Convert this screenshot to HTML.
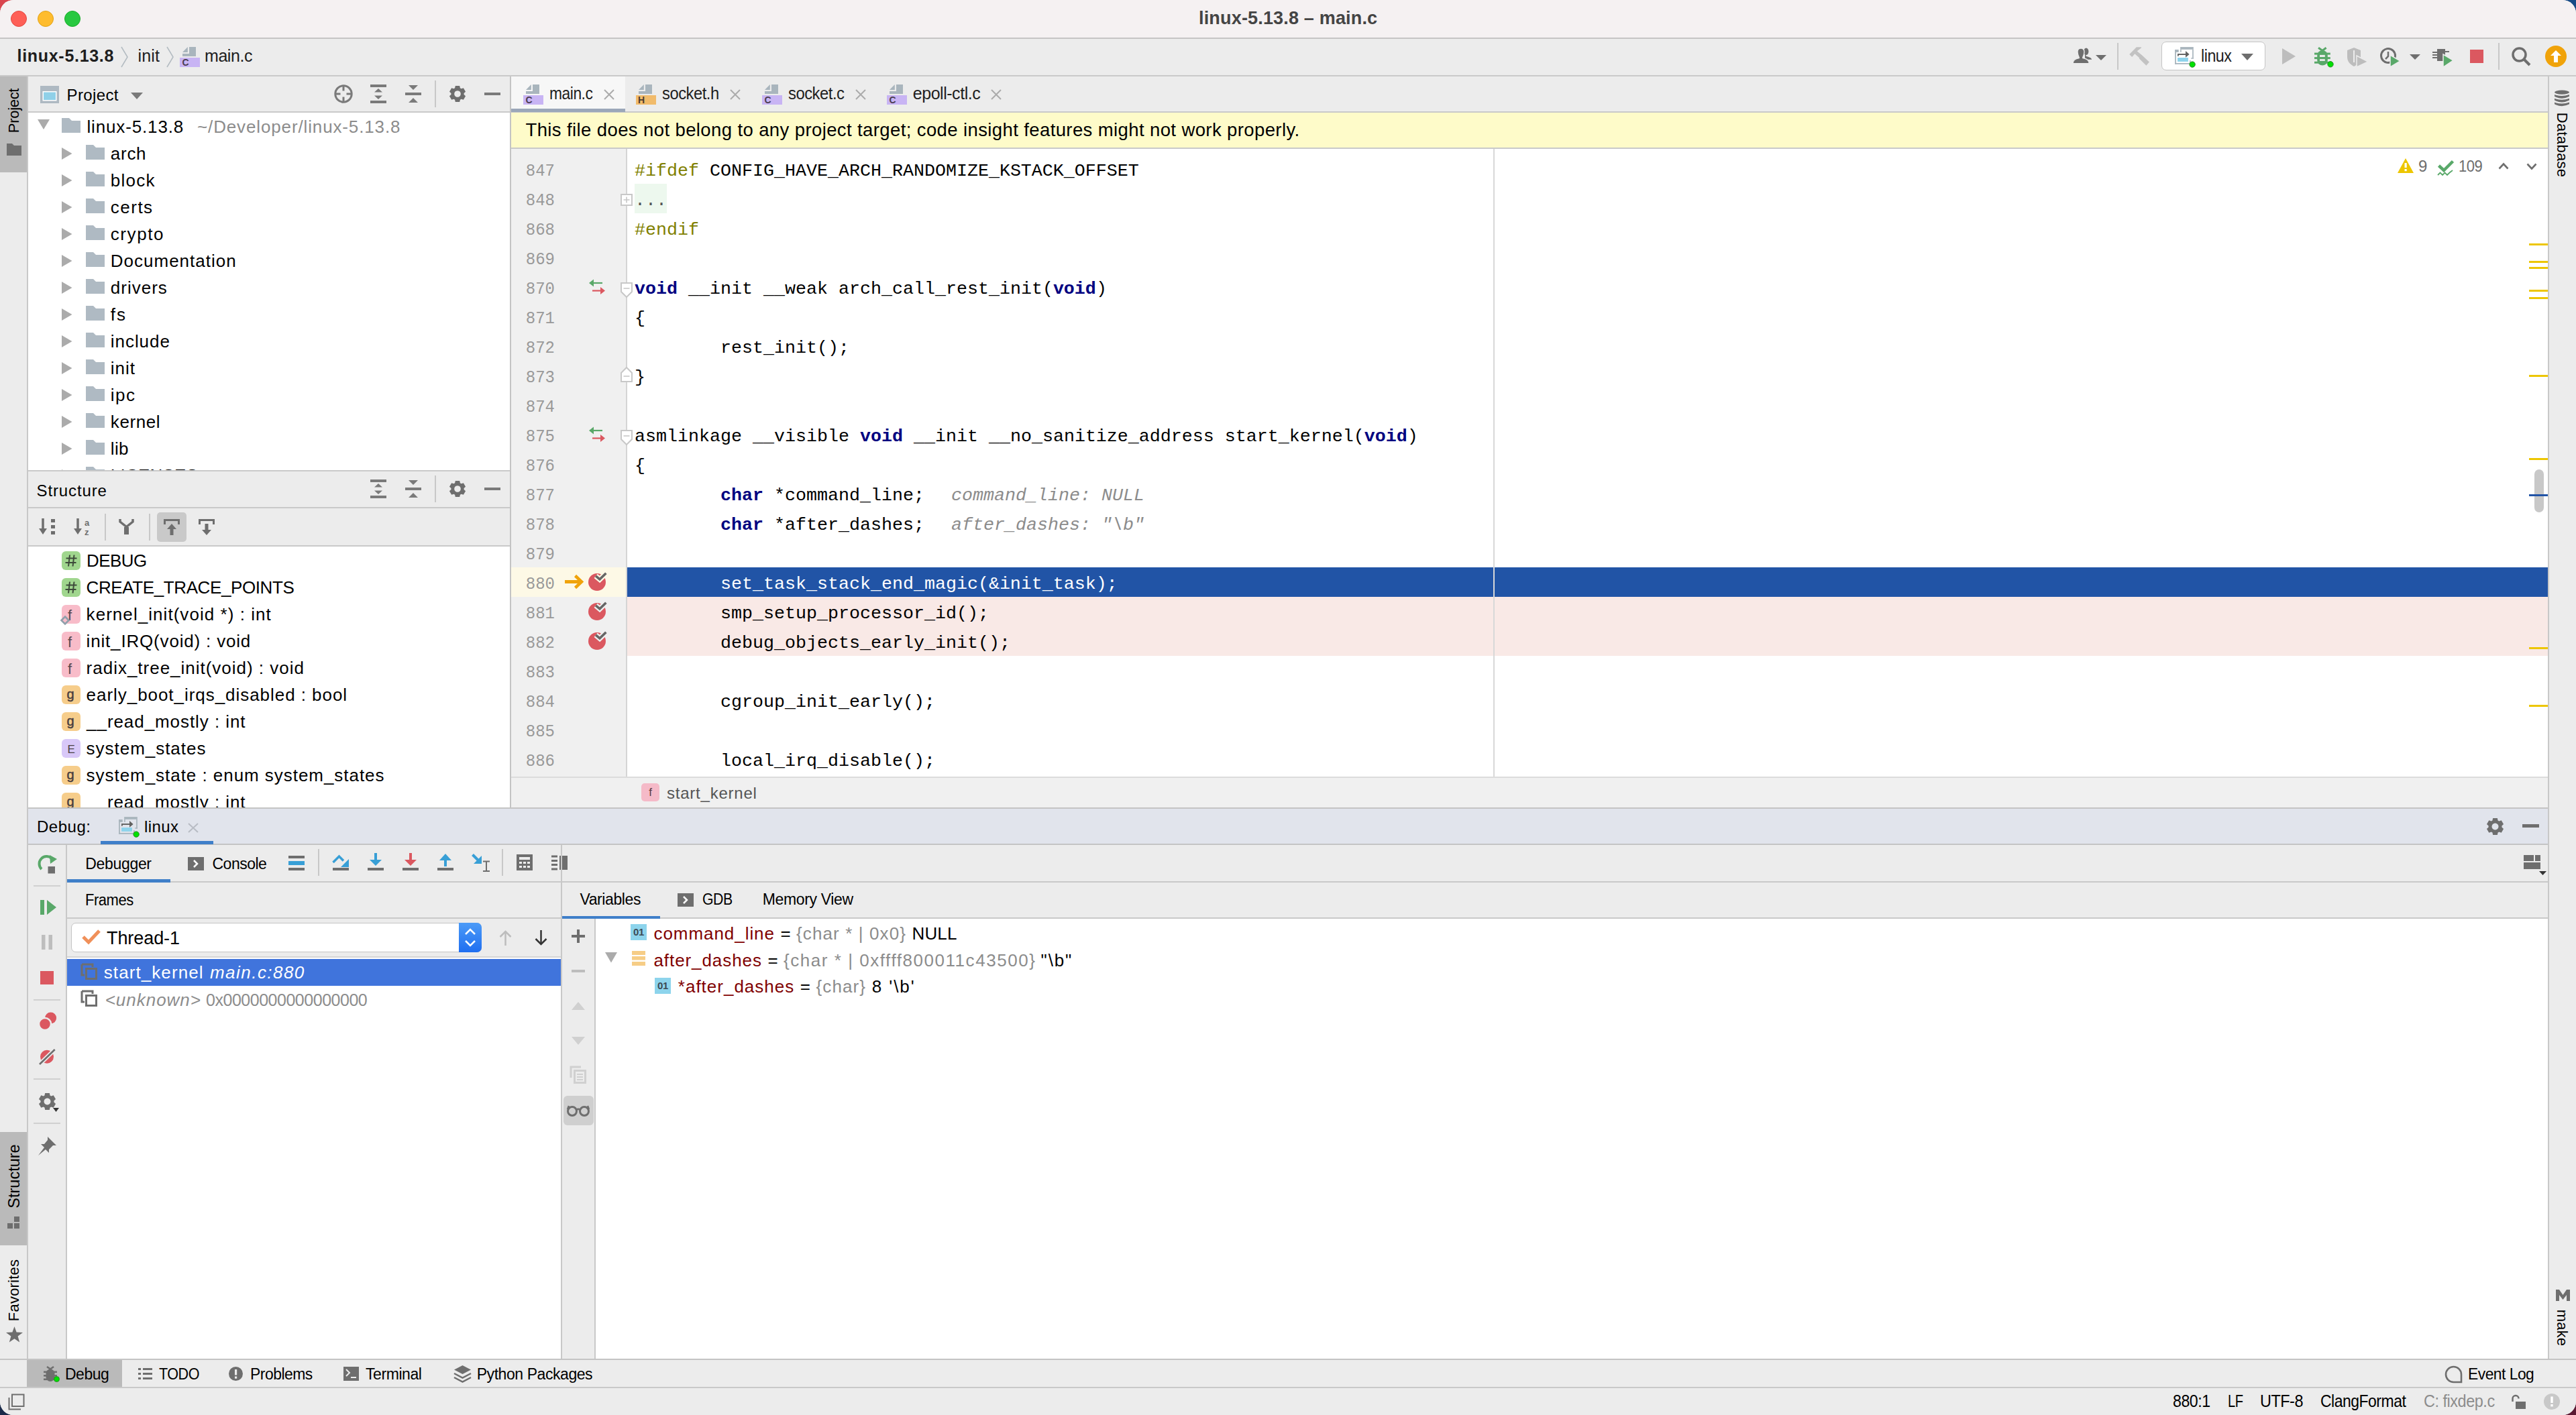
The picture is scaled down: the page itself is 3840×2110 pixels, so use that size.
<!DOCTYPE html><html><head><meta charset="utf-8"><style>*{box-sizing:border-box;margin:0;padding:0}
html,body{width:3840px;height:2110px;overflow:hidden;background:#1b2a4a}
body{position:relative;font-family:"Liberation Sans",sans-serif;font-size:26px;color:#000}
.a{position:absolute}
.t{position:absolute;white-space:pre}
svg{position:absolute;overflow:visible}
</style></head><body><div class="a" style="left:0px;top:0px;width:60px;height:60px;background:#d9454e;"></div>
<div class="a" style="left:3780px;top:0px;width:60px;height:60px;background:#174b86;"></div>
<div class="a" style="left:3780px;top:2050px;width:60px;height:60px;background:#5b1a33;"></div>
<div class="a" style="left:0;top:0;width:3840px;height:2110px;background:#ececec;border-radius:20px;overflow:hidden">
<div class="a" style="left:0px;top:0px;width:3840px;height:57px;background:#f5f1f2;"></div>
<div class="a" style="left:0px;top:56px;width:3840px;height:2px;background:#c6c4c5;"></div>
<div class="a" style="left:16px;top:16px;width:24px;height:24px;border-radius:50%;background:#fe5f57;border:1px solid #e2463f"></div>
<div class="a" style="left:56px;top:16px;width:24px;height:24px;border-radius:50%;background:#febc2e;border:1px solid #e1a116"></div>
<div class="a" style="left:96px;top:16px;width:24px;height:24px;border-radius:50%;background:#28c840;border:1px solid #1aab29"></div>
<div class="t" style="left:1787.00px;top:7.64px;font-size:27px;line-height:38px;letter-spacing:0.175px;color:#444;font-family:'Liberation Sans',sans-serif;font-weight:bold;">linux-5.13.8 – main.c</div>
<div class="a" style="left:0px;top:58px;width:3840px;height:54px;background:#ececec;"></div>
<div class="a" style="left:0px;top:112px;width:3840px;height:2px;background:#c9c9c9;"></div>
<div class="t" style="left:25.50px;top:65.83px;font-size:25px;line-height:35px;letter-spacing:0.705px;color:#1e1e1e;font-family:'Liberation Sans',sans-serif;font-weight:bold;">linux-5.13.8</div>
<svg style="left:180px;top:70px;" width="11" height="30" viewBox="0 0 11 30"><path d="M1 0 L10 15 L1 30" fill="none" stroke="#b4bcc2" stroke-width="1.6"/></svg>
<div class="t" style="left:205.50px;top:65.83px;font-size:25px;line-height:35px;letter-spacing:0.167px;color:#1e1e1e;font-family:'Liberation Sans',sans-serif;">init</div>
<svg style="left:248px;top:70px;" width="11" height="30" viewBox="0 0 11 30"><path d="M1 0 L10 15 L1 30" fill="none" stroke="#b4bcc2" stroke-width="1.6"/></svg>
<svg style="left:268px;top:70px" width="30" height="30" viewBox="0 0 30 30"><path d="M4 8 L11.8 0 V8 Z" fill="#a9b5bd"/><path d="M14 0 H24 V14 H4 V10 H14 Z" fill="#a9b5bd"/><rect x="0" y="16" width="30" height="14" fill="#c8b4f4"/><text x="3.5" y="27.8" font-family="Liberation Sans" font-weight="bold" font-size="14" fill="#4a3c50">C</text></svg>
<div class="t" style="left:305.00px;top:65.83px;font-size:25px;line-height:35px;letter-spacing:-0.450px;color:#1e1e1e;font-family:'Liberation Sans',sans-serif;">main.c</div>
<svg style="left:3088px;top:70px;" width="32" height="26" viewBox="0 0 32 26"><ellipse cx="21.8" cy="6.8" rx="3.6" ry="5.2" fill="#6e6e6e"/><path d="M20 10 L22 14 C26 14.8 29.5 16 30.2 18.7 H20z" fill="#6e6e6e"/><g fill="#6e6e6e" stroke="#ececec" stroke-width="1.4"><path d="M9 7.5 C9 3.5 11 2 14 2 C17 2 19 3.5 19 7.5 C19 11 17.5 14 16.8 15.5 V16.5 C23 17.5 26.2 19.5 26.2 24.7 H2 C2 19.5 5 17.5 11.2 16.5 V15.5 C10.5 14 9 11 9 7.5Z"/></g></svg>
<svg style="left:3124px;top:82px;" width="16" height="8" viewBox="0 0 16 8"><path d="M0 0h16l-8 8z" fill="#6e6e6e"/></svg>
<div class="a" style="left:3156px;top:64px;width:2px;height:40px;background:#c8c8c8;"></div>
<svg style="left:3174px;top:70px;" width="30" height="28" viewBox="0 0 30 28"><path d="M0.2 11L10.8 0.2H17.9V1.6L11.7 6.3L19.8 13.1L29.9 22.6L25.4 27.8L15 17.5L14.8 16L8.3 10.3L4.2 15Z" fill="#c2c2c2"/></svg>
<div class="a" style="left:3222px;top:62px;width:155px;height:43px;background:#fff;border:1.5px solid #c4c4c4;border-radius:7px"></div>
<svg style="left:3241px;top:70px" width="32" height="32" viewBox="0 0 32 32"><g fill="#a9b5bd"><rect x="9.1" y="0.1" width="19.7" height="3.7"/><rect x="9.1" y="3.8" width="1.6" height="4.1"/><rect x="27.1" y="3.8" width="1.7" height="13.8"/><rect x="25.1" y="16.2" width="3.7" height="1.4"/><rect x="1.1" y="4" width="5.6" height="3.9"/><rect x="1.1" y="4" width="1.8" height="21.8"/><rect x="1.1" y="24" width="22" height="1.8"/><rect x="23.1" y="20" width="1.6" height="4"/></g><g fill="#606060"><rect x="5" y="10.1" width="12.6" height="1.9"/><rect x="5" y="10.1" width="1.7" height="3.7"/><path d="M17 5.9L22.6 10.9L17 15.8Z"/></g><rect x="5" y="16" width="15.9" height="5.9" fill="#8ed3ec"/><circle cx="27.1" cy="26.1" r="4.2" fill="#00e000" stroke="#2a8a2a" stroke-width="1"/></svg>
<div class="t" style="left:3281.00px;top:65.83px;font-size:25px;line-height:35px;letter-spacing:-0.500px;color:#1e1e1e;font-family:'Liberation Sans',sans-serif;transform:scaleX(0.9293);transform-origin:0.00px 0;">linux</div>
<svg style="left:3341px;top:80px;" width="18" height="10" viewBox="0 0 18 10"><path d="M0 0h18l-9 10z" fill="#6e6e6e"/></svg>
<svg style="left:3402px;top:72px;" width="20" height="24" viewBox="0 0 20 24"><path d="M0 0 L20 12 L0 24z" fill="#bdbdbd"/></svg>
<svg style="left:3450px;top:70px;" width="30" height="30" viewBox="0 0 30 30"><path d="M6 1.2L12 5.5L17.6 1.2" fill="none" stroke="#59a869" stroke-width="3"/><rect x="4.2" y="5" width="15.6" height="22.6" rx="7.8" fill="#59a869"/><rect x="0" y="8.6" width="23.8" height="3" fill="#59a869"/><rect x="0" y="15.1" width="23.8" height="3" fill="#59a869"/><rect x="0" y="21.7" width="23.8" height="3" fill="#59a869"/><rect x="8" y="11.9" width="7.8" height="3.1" fill="#ececec"/><rect x="8" y="18.1" width="7.8" height="2.8" fill="#ececec"/><circle cx="24" cy="25.8" r="4.2" fill="#00e000" stroke="#2a8a2a" stroke-width="1"/></svg>
<svg style="left:3499px;top:71px;" width="31" height="29" viewBox="0 0 31 29"><path d="M0 4 L10 0 L20 4 V14 C20 22 14 26 10 28 C6 26 0 22 0 14Z" fill="#bdbdbd"/><path d="M10 4v18" stroke="#ececec" stroke-width="2"/><path d="M14 12 L31 21 L14 29z" fill="#bdbdbd" stroke="#ececec" stroke-width="1.5"/></svg>
<svg style="left:3548px;top:71px;" width="31" height="29" viewBox="0 0 31 29"><circle cx="12" cy="12" r="10.5" fill="none" stroke="#6e6e6e" stroke-width="3"/><path d="M12 6v7l-4 4" fill="none" stroke="#6e6e6e" stroke-width="2.5"/><path d="M15 11 L30 20 L15 29z" fill="#59a869" stroke="#ececec" stroke-width="1.5"/></svg>
<svg style="left:3592px;top:81px;" width="16" height="8" viewBox="0 0 16 8"><path d="M0 0h16l-8 8z" fill="#6e6e6e"/></svg>
<svg style="left:3626px;top:73px;" width="31" height="27" viewBox="0 0 31 27"><rect x="7" y="0" width="12" height="18" fill="#6e6e6e"/><path d="M0 5h7M0 9h7M0 13h7M19 4h6" stroke="#6e6e6e" stroke-width="2"/><path d="M16 8 L31 17 L16 27z" fill="#59a869" stroke="#ececec" stroke-width="1.5"/></svg>
<div class="a" style="left:3682px;top:74px;width:20px;height:20px;background:#db5860;"></div>
<div class="a" style="left:3724px;top:64px;width:2px;height:40px;background:#c8c8c8;"></div>
<svg style="left:3744px;top:70px;" width="29" height="29" viewBox="0 0 29 29"><circle cx="11.5" cy="11.5" r="9.5" fill="none" stroke="#6e6e6e" stroke-width="3.5"/><path d="M18.5 18.5 L27 27" stroke="#6e6e6e" stroke-width="4"/></svg>
<svg style="left:3794px;top:68px;" width="32" height="32" viewBox="0 0 32 32"><circle cx="16" cy="16" r="16" fill="#f0a30a"/><path d="M16 7 L24 15 H19 V25 H13 V15 H8Z" fill="#fff"/></svg>
<div class="a" style="left:0px;top:114px;width:40px;height:1912px;background:#ececec;"></div>
<div class="a" style="left:40px;top:114px;width:2px;height:1912px;background:#c8c8c8;"></div>
<div class="a" style="left:0px;top:114px;width:40px;height:143px;background:#bababa;"></div>
<div class="t" style="left:21px;top:165px;font-size:22px;line-height:28px;letter-spacing:-0.3px;transform:translate(-50%,-50%) rotate(-90deg);transform-origin:center;color:#000">Project</div>
<svg style="left:10px;top:214px;" width="22" height="18" viewBox="0 0 22 18"><path d="M0 0H8L11 3H22V18H0Z" fill="#6e6e6e"/></svg>
<div class="a" style="left:0px;top:1688px;width:40px;height:169px;background:#bababa;"></div>
<div class="t" style="left:21px;top:1754px;font-size:23.5px;line-height:28px;letter-spacing:0px;transform:translate(-50%,-50%) rotate(-90deg);color:#000">Structure</div>
<svg style="left:11px;top:1814px;" width="19" height="19" viewBox="0 0 19 19"><rect x="10" y="0" width="8" height="8" fill="#6e6e6e"/><rect x="0" y="10" width="8" height="8" fill="#6e6e6e"/><rect x="10" y="10" width="8" height="8" fill="#6e6e6e"/></svg>
<div class="t" style="left:21px;top:1924px;font-size:22px;line-height:28px;letter-spacing:0.2px;transform:translate(-50%,-50%) rotate(-90deg);color:#000">Favorites</div>
<svg style="left:9px;top:1978px;" width="25" height="25" viewBox="0 0 25 25"><path d="M12.5 0 L15.6 8.6 L25 8.9 L17.6 14.6 L20.2 23.5 L12.5 18.3 L4.8 23.5 L7.4 14.6 L0 8.9 L9.4 8.6Z" fill="#6e6e6e"/></svg>
<div class="a" style="left:3798px;top:114px;width:2px;height:1912px;background:#c8c8c8;"></div>
<div class="a" style="left:3800px;top:114px;width:40px;height:1912px;background:#ececec;"></div>
<svg style="left:3808px;top:134px;" width="22" height="26" viewBox="0 0 22 26"><g fill="#6e6e6e"><ellipse cx="11" cy="3.6" rx="11" ry="3.1"/><path d="M0 7.0Q11 11.0 22 7.0V9.8Q11 15.6 0 9.8Z"/><path d="M0 12.8Q11 16.8 22 12.8V15.6Q11 21.4 0 15.6Z"/><path d="M0 18.5Q11 22.5 22 18.5V21.3Q11 27.1 0 21.3Z"/></g></svg>
<div class="t" style="left:3819px;top:216px;font-size:22px;line-height:28px;letter-spacing:0.3px;transform:translate(-50%,-50%) rotate(90deg);color:#000">Database</div>
<svg style="left:3810px;top:1923px;" width="21" height="17" viewBox="0 0 21 17"><path d="M0 17V0h5l5.5 8L16 0h5v17h-5V8l-5.5 7L5 8v9z" fill="#6e6e6e"/></svg>
<div class="t" style="left:3819px;top:1980px;font-size:22px;line-height:28px;letter-spacing:0.2px;transform:translate(-50%,-50%) rotate(90deg);color:#000">make</div>
<div class="a" style="left:42px;top:114px;width:718px;height:52px;background:#ececec;"></div>
<div class="a" style="left:42px;top:166px;width:718px;height:2px;background:#c9c9c9;"></div>
<div class="a" style="left:42px;top:168px;width:718px;height:535px;background:#fff;"></div>
<svg style="left:60px;top:128px;" width="28" height="26" viewBox="0 0 28 26"><rect x="0" y="0" width="28" height="26" fill="#aeb9c2"/><rect x="3.5" y="8" width="21" height="14.5" fill="#fff"/><rect x="5" y="9.5" width="18" height="11.5" fill="#8fd0e8"/></svg>
<div class="t" style="left:99.60px;top:124.68px;font-size:24px;line-height:34px;letter-spacing:0.375px;color:#000;font-family:'Liberation Sans',sans-serif;">Project</div>
<svg style="left:195px;top:138px;" width="18" height="10" viewBox="0 0 18 10"><path d="M0 0h18l-9 10z" fill="#7a7a7a"/></svg>
<svg style="left:498px;top:126px;" width="28" height="28" viewBox="0 0 28 28"><circle cx="14" cy="14" r="12.2" fill="none" stroke="#7a7a7a" stroke-width="3"/><path d="M14 1.5v8M14 18.5v8M1.5 14h8M18.5 14h8" stroke="#7a7a7a" stroke-width="3"/></svg>
<svg style="left:552px;top:126px;" width="24" height="28" viewBox="0 0 24 28"><rect x="0" y="0" width="24" height="4" fill="#7a7a7a"/><rect x="0" y="24" width="24" height="4" fill="#7a7a7a"/><path d="M6 11.5 L12 6 L18 11.5z M6 16.5 L12 22 L18 16.5z" fill="#7a7a7a"/></svg>
<svg style="left:604px;top:127px;" width="24" height="26" viewBox="0 0 24 26"><path d="M5 0h14l-7 7z M5 26h14l-7-7z" fill="#7a7a7a"/><rect x="0" y="11" width="24" height="4" fill="#7a7a7a"/></svg>
<div class="a" style="left:648px;top:120px;width:2px;height:40px;background:#c8c8c8;"></div>
<svg style="left:669px;top:127px" width="26" height="26" viewBox="0 0 26 26"><path fill="#6e6e6e" fill-rule="evenodd" d="M9.09 4.23 L9.79 0.92 L16.21 0.92 L16.91 4.23 L18.63 5.23 L21.85 4.18 L25.07 9.74 L22.55 12.01 L22.55 13.99 L25.07 16.26 L21.85 21.82 L18.63 20.77 L16.91 21.77 L16.21 25.08 L9.79 25.08 L9.09 21.77 L7.37 20.77 L4.15 21.82 L0.93 16.26 L3.45 13.99 L3.45 12.01 L0.93 9.74 L4.15 4.18 L7.37 5.23Z M13 8.2a4.8 4.8 0 1 0 0.01 0Z"/></svg>
<div class="a" style="left:722px;top:138px;width:24px;height:4px;background:#7a7a7a;"></div>
<svg style="left:56px;top:178px;" width="18" height="15" viewBox="0 0 18 15"><path d="M0 0h18l-9 15z" fill="#ababab"/></svg>
<svg style="left:92px;top:176px" width="28" height="22" viewBox="0 0 28 22"><path d="M0 0 H11 L15 4 H28 V22 H0 Z" fill="#afbac3"/></svg>
<div class="t" style="left:129.50px;top:170.99px;font-size:26px;line-height:36px;letter-spacing:0.845px;color:#000;font-family:'Liberation Sans',sans-serif;">linux-5.13.8</div>
<div class="t" style="left:294.00px;top:170.99px;font-size:26px;line-height:36px;letter-spacing:0.865px;color:#8c8c8c;font-family:'Liberation Sans',sans-serif;">~/Developer/linux-5.13.8</div>
<svg style="left:92px;top:220px;" width="16" height="18" viewBox="0 0 16 18"><path d="M0 0l15.5 9L0 18z" fill="#ababab"/></svg>
<svg style="left:128px;top:216px" width="28" height="22" viewBox="0 0 28 22"><path d="M0 0 H11 L15 4 H28 V22 H0 Z" fill="#afbac3"/></svg>
<div class="t" style="left:164.80px;top:210.99px;font-size:26px;line-height:36px;letter-spacing:0.733px;color:#000;font-family:'Liberation Sans',sans-serif;">arch</div>
<svg style="left:92px;top:260px;" width="16" height="18" viewBox="0 0 16 18"><path d="M0 0l15.5 9L0 18z" fill="#ababab"/></svg>
<svg style="left:128px;top:256px" width="28" height="22" viewBox="0 0 28 22"><path d="M0 0 H11 L15 4 H28 V22 H0 Z" fill="#afbac3"/></svg>
<div class="t" style="left:164.80px;top:250.99px;font-size:26px;line-height:36px;letter-spacing:1.250px;color:#000;font-family:'Liberation Sans',sans-serif;">block</div>
<svg style="left:92px;top:300px;" width="16" height="18" viewBox="0 0 16 18"><path d="M0 0l15.5 9L0 18z" fill="#ababab"/></svg>
<svg style="left:128px;top:296px" width="28" height="22" viewBox="0 0 28 22"><path d="M0 0 H11 L15 4 H28 V22 H0 Z" fill="#afbac3"/></svg>
<div class="t" style="left:164.80px;top:290.99px;font-size:26px;line-height:36px;letter-spacing:1.488px;color:#000;font-family:'Liberation Sans',sans-serif;">certs</div>
<svg style="left:92px;top:340px;" width="16" height="18" viewBox="0 0 16 18"><path d="M0 0l15.5 9L0 18z" fill="#ababab"/></svg>
<svg style="left:128px;top:336px" width="28" height="22" viewBox="0 0 28 22"><path d="M0 0 H11 L15 4 H28 V22 H0 Z" fill="#afbac3"/></svg>
<div class="t" style="left:164.80px;top:330.99px;font-size:26px;line-height:36px;letter-spacing:1.570px;color:#000;font-family:'Liberation Sans',sans-serif;">crypto</div>
<svg style="left:92px;top:380px;" width="16" height="18" viewBox="0 0 16 18"><path d="M0 0l15.5 9L0 18z" fill="#ababab"/></svg>
<svg style="left:128px;top:376px" width="28" height="22" viewBox="0 0 28 22"><path d="M0 0 H11 L15 4 H28 V22 H0 Z" fill="#afbac3"/></svg>
<div class="t" style="left:164.80px;top:370.99px;font-size:26px;line-height:36px;letter-spacing:1.000px;color:#000;font-family:'Liberation Sans',sans-serif;">Documentation</div>
<svg style="left:92px;top:420px;" width="16" height="18" viewBox="0 0 16 18"><path d="M0 0l15.5 9L0 18z" fill="#ababab"/></svg>
<svg style="left:128px;top:416px" width="28" height="22" viewBox="0 0 28 22"><path d="M0 0 H11 L15 4 H28 V22 H0 Z" fill="#afbac3"/></svg>
<div class="t" style="left:164.80px;top:410.99px;font-size:26px;line-height:36px;letter-spacing:1.000px;color:#000;font-family:'Liberation Sans',sans-serif;">drivers</div>
<svg style="left:92px;top:460px;" width="16" height="18" viewBox="0 0 16 18"><path d="M0 0l15.5 9L0 18z" fill="#ababab"/></svg>
<svg style="left:128px;top:456px" width="28" height="22" viewBox="0 0 28 22"><path d="M0 0 H11 L15 4 H28 V22 H0 Z" fill="#afbac3"/></svg>
<div class="t" style="left:164.80px;top:450.99px;font-size:26px;line-height:36px;letter-spacing:1.950px;color:#000;font-family:'Liberation Sans',sans-serif;">fs</div>
<svg style="left:92px;top:500px;" width="16" height="18" viewBox="0 0 16 18"><path d="M0 0l15.5 9L0 18z" fill="#ababab"/></svg>
<svg style="left:128px;top:496px" width="28" height="22" viewBox="0 0 28 22"><path d="M0 0 H11 L15 4 H28 V22 H0 Z" fill="#afbac3"/></svg>
<div class="t" style="left:164.80px;top:490.99px;font-size:26px;line-height:36px;letter-spacing:0.950px;color:#000;font-family:'Liberation Sans',sans-serif;">include</div>
<svg style="left:92px;top:540px;" width="16" height="18" viewBox="0 0 16 18"><path d="M0 0l15.5 9L0 18z" fill="#ababab"/></svg>
<svg style="left:128px;top:536px" width="28" height="22" viewBox="0 0 28 22"><path d="M0 0 H11 L15 4 H28 V22 H0 Z" fill="#afbac3"/></svg>
<div class="t" style="left:164.80px;top:530.99px;font-size:26px;line-height:36px;letter-spacing:0.983px;color:#000;font-family:'Liberation Sans',sans-serif;">init</div>
<svg style="left:92px;top:580px;" width="16" height="18" viewBox="0 0 16 18"><path d="M0 0l15.5 9L0 18z" fill="#ababab"/></svg>
<svg style="left:128px;top:576px" width="28" height="22" viewBox="0 0 28 22"><path d="M0 0 H11 L15 4 H28 V22 H0 Z" fill="#afbac3"/></svg>
<div class="t" style="left:164.80px;top:570.99px;font-size:26px;line-height:36px;letter-spacing:1.475px;color:#000;font-family:'Liberation Sans',sans-serif;">ipc</div>
<svg style="left:92px;top:620px;" width="16" height="18" viewBox="0 0 16 18"><path d="M0 0l15.5 9L0 18z" fill="#ababab"/></svg>
<svg style="left:128px;top:616px" width="28" height="22" viewBox="0 0 28 22"><path d="M0 0 H11 L15 4 H28 V22 H0 Z" fill="#afbac3"/></svg>
<div class="t" style="left:164.80px;top:610.99px;font-size:26px;line-height:36px;letter-spacing:0.590px;color:#000;font-family:'Liberation Sans',sans-serif;">kernel</div>
<svg style="left:92px;top:660px;" width="16" height="18" viewBox="0 0 16 18"><path d="M0 0l15.5 9L0 18z" fill="#ababab"/></svg>
<svg style="left:128px;top:656px" width="28" height="22" viewBox="0 0 28 22"><path d="M0 0 H11 L15 4 H28 V22 H0 Z" fill="#afbac3"/></svg>
<div class="t" style="left:164.80px;top:650.99px;font-size:26px;line-height:36px;letter-spacing:0.350px;color:#000;font-family:'Liberation Sans',sans-serif;">lib</div>
<svg style="left:92px;top:700px;" width="16" height="18" viewBox="0 0 16 18"><path d="M0 0l15.5 9L0 18z" fill="#ababab"/></svg>
<svg style="left:128px;top:696px" width="28" height="22" viewBox="0 0 28 22"><path d="M0 0 H11 L15 4 H28 V22 H0 Z" fill="#afbac3"/></svg>
<div class="t" style="left:164.80px;top:690.99px;font-size:26px;line-height:36px;letter-spacing:0.214px;color:#000;font-family:'Liberation Sans',sans-serif;">LICENSES</div>
<div class="a" style="left:42px;top:701px;width:718px;height:2px;background:#c9c9c9;"></div>
<div class="a" style="left:42px;top:703px;width:718px;height:53px;background:#ececec;"></div>
<div class="t" style="left:54.50px;top:715.18px;font-size:24px;line-height:34px;letter-spacing:0.881px;color:#000;font-family:'Liberation Sans',sans-serif;">Structure</div>
<svg style="left:552px;top:715px;" width="24" height="28" viewBox="0 0 24 28"><rect x="0" y="0" width="24" height="4" fill="#7a7a7a"/><rect x="0" y="24" width="24" height="4" fill="#7a7a7a"/><path d="M6 11.5 L12 6 L18 11.5z M6 16.5 L12 22 L18 16.5z" fill="#7a7a7a"/></svg>
<svg style="left:604px;top:716px;" width="24" height="26" viewBox="0 0 24 26"><path d="M5 0h14l-7 7z M5 26h14l-7-7z" fill="#7a7a7a"/><rect x="0" y="11" width="24" height="4" fill="#7a7a7a"/></svg>
<div class="a" style="left:648px;top:709px;width:2px;height:40px;background:#c8c8c8;"></div>
<svg style="left:669px;top:716px" width="26" height="26" viewBox="0 0 26 26"><path fill="#6e6e6e" fill-rule="evenodd" d="M9.09 4.23 L9.79 0.92 L16.21 0.92 L16.91 4.23 L18.63 5.23 L21.85 4.18 L25.07 9.74 L22.55 12.01 L22.55 13.99 L25.07 16.26 L21.85 21.82 L18.63 20.77 L16.91 21.77 L16.21 25.08 L9.79 25.08 L9.09 21.77 L7.37 20.77 L4.15 21.82 L0.93 16.26 L3.45 13.99 L3.45 12.01 L0.93 9.74 L4.15 4.18 L7.37 5.23Z M13 8.2a4.8 4.8 0 1 0 0.01 0Z"/></svg>
<div class="a" style="left:722px;top:727px;width:24px;height:4px;background:#7a7a7a;"></div>
<div class="a" style="left:42px;top:756px;width:718px;height:2px;background:#c9c9c9;"></div>
<div class="a" style="left:42px;top:758px;width:718px;height:55px;background:#ececec;"></div>
<div class="a" style="left:42px;top:813px;width:718px;height:2px;background:#c9c9c9;"></div>
<div class="a" style="left:42px;top:815px;width:718px;height:390px;background:#fff;"></div>
<svg style="left:58px;top:773px;" width="24" height="25" viewBox="0 0 24 25"><path d="M6 0v17" stroke="#6e6e6e" stroke-width="3.5"/><path d="M0 15h12l-6 9z" fill="#6e6e6e"/><rect x="18" y="1" width="6" height="5" fill="#6e6e6e"/><rect x="18" y="10" width="6" height="5" fill="#6e6e6e"/><rect x="18" y="19" width="6" height="5" fill="#6e6e6e"/></svg>
<svg style="left:110px;top:773px;" width="27" height="25" viewBox="0 0 27 25"><path d="M6 0v17" stroke="#6e6e6e" stroke-width="3.5"/><path d="M0 15h12l-6 9z" fill="#6e6e6e"/><text x="16" y="11" font-family="Liberation Sans" font-weight="bold" font-size="13" fill="#6e6e6e">a</text><text x="16" y="25" font-family="Liberation Sans" font-weight="bold" font-size="13" fill="#6e6e6e">z</text></svg>
<div class="a" style="left:156px;top:766px;width:2px;height:40px;background:#c8c8c8;"></div>
<svg style="left:177px;top:774px;" width="23" height="23" viewBox="0 0 23 23"><path d="M2 0v4l9.5 7.5L21 4V0" fill="none" stroke="#6e6e6e" stroke-width="3.5"/><rect x="8" y="12" width="7" height="11" fill="#6e6e6e"/></svg>
<div class="a" style="left:222px;top:766px;width:2px;height:40px;background:#c8c8c8;"></div>
<div class="a" style="left:234px;top:764px;width:44px;height:44px;background:#c9c9c9;border-radius:5px"></div>
<svg style="left:244px;top:774px;" width="24" height="24" viewBox="0 0 24 24"><path d="M1.5 8V1.5h21V8" fill="none" stroke="#6e6e6e" stroke-width="3"/><path d="M12 7 L19 15 H14.5 V24 H9.5 V15 H5Z" fill="#6e6e6e"/></svg>
<svg style="left:296px;top:774px;" width="24" height="24" viewBox="0 0 24 24"><path d="M1.5 8V1.5h21V8" fill="none" stroke="#6e6e6e" stroke-width="3"/><path d="M12 24 L19 16 H14.5 V7 H9.5 V16 H5Z" fill="#6e6e6e"/></svg>
<svg style="left:92px;top:822px;" width="28" height="28" viewBox="0 0 28 28"><rect width="28" height="28" rx="6" fill="#a0d68e"/><path d="M6.5 10.5H22.5M5.5 17H21.5M12 5.5L10 22.5M18.5 5.5L16.5 22.5" stroke="#3d4a3a" stroke-width="2.0"/></svg>
<div class="t" style="left:128.60px;top:817.99px;font-size:26px;line-height:36px;letter-spacing:-0.500px;color:#000;font-family:'Liberation Sans',sans-serif;transform:scaleX(0.9956);transform-origin:0.00px 0;">DEBUG</div>
<svg style="left:92px;top:862px;" width="28" height="28" viewBox="0 0 28 28"><rect width="28" height="28" rx="6" fill="#a0d68e"/><path d="M6.5 10.5H22.5M5.5 17H21.5M12 5.5L10 22.5M18.5 5.5L16.5 22.5" stroke="#3d4a3a" stroke-width="2.0"/></svg>
<div class="t" style="left:128.60px;top:857.99px;font-size:26px;line-height:36px;letter-spacing:-0.400px;color:#000;font-family:'Liberation Sans',sans-serif;">CREATE_TRACE_POINTS</div>
<svg style="left:92px;top:902px;" width="28" height="28" viewBox="0 0 28 28"><rect width="28" height="28" rx="6" fill="#f8bcc9"/><text x="9" y="23" font-family="Liberation Sans" font-size="22" fill="#5a4a4e">f</text></svg>
<svg style="left:90px;top:918px;" width="14" height="14" viewBox="0 0 14 14"><path d="M7 1.5L12.5 7L7 12.5L1.5 7Z" fill="#f8bcc9" stroke="#8fa0ab" stroke-width="2.6"/></svg>
<div class="t" style="left:128.60px;top:897.99px;font-size:26px;line-height:36px;letter-spacing:1.050px;color:#000;font-family:'Liberation Sans',sans-serif;">kernel_init(void *) : int</div>
<svg style="left:92px;top:942px;" width="28" height="28" viewBox="0 0 28 28"><rect width="28" height="28" rx="6" fill="#f8bcc9"/><text x="9" y="23" font-family="Liberation Sans" font-size="22" fill="#5a4a4e">f</text></svg>
<div class="t" style="left:128.60px;top:937.99px;font-size:26px;line-height:36px;letter-spacing:0.822px;color:#000;font-family:'Liberation Sans',sans-serif;">init_IRQ(void) : void</div>
<svg style="left:92px;top:982px;" width="28" height="28" viewBox="0 0 28 28"><rect width="28" height="28" rx="6" fill="#f8bcc9"/><text x="9" y="23" font-family="Liberation Sans" font-size="22" fill="#5a4a4e">f</text></svg>
<div class="t" style="left:128.60px;top:977.99px;font-size:26px;line-height:36px;letter-spacing:0.987px;color:#000;font-family:'Liberation Sans',sans-serif;">radix_tree_init(void) : void</div>
<svg style="left:92px;top:1022px;" width="28" height="28" viewBox="0 0 28 28"><rect width="28" height="28" rx="6" fill="#f6cd8b"/><text x="7.5" y="19.5" font-family="Liberation Sans" font-size="20" fill="#4a4040" stroke="#4a4040" stroke-width="0.5">g</text></svg>
<div class="t" style="left:128.60px;top:1017.99px;font-size:26px;line-height:36px;letter-spacing:0.953px;color:#000;font-family:'Liberation Sans',sans-serif;">early_boot_irqs_disabled : bool</div>
<svg style="left:92px;top:1062px;" width="28" height="28" viewBox="0 0 28 28"><rect width="28" height="28" rx="6" fill="#f6cd8b"/><text x="7.5" y="19.5" font-family="Liberation Sans" font-size="20" fill="#4a4040" stroke="#4a4040" stroke-width="0.5">g</text></svg>
<div class="t" style="left:129.10px;top:1057.99px;font-size:26px;line-height:36px;letter-spacing:0.931px;color:#000;font-family:'Liberation Sans',sans-serif;">__read_mostly : int</div>
<svg style="left:92px;top:1102px;" width="28" height="28" viewBox="0 0 28 28"><rect width="28" height="28" rx="6" fill="#d8c8f8"/><text x="8.5" y="20.5" font-family="Liberation Sans" font-size="17" fill="#4a4040">E</text></svg>
<div class="t" style="left:128.60px;top:1097.99px;font-size:26px;line-height:36px;letter-spacing:0.971px;color:#000;font-family:'Liberation Sans',sans-serif;">system_states</div>
<svg style="left:92px;top:1142px;" width="28" height="28" viewBox="0 0 28 28"><rect width="28" height="28" rx="6" fill="#f6cd8b"/><text x="7.5" y="19.5" font-family="Liberation Sans" font-size="20" fill="#4a4040" stroke="#4a4040" stroke-width="0.5">g</text></svg>
<div class="t" style="left:128.60px;top:1137.99px;font-size:26px;line-height:36px;letter-spacing:0.958px;color:#000;font-family:'Liberation Sans',sans-serif;">system_state : enum system_states</div>
<svg style="left:92px;top:1182px;" width="28" height="28" viewBox="0 0 28 28"><rect width="28" height="28" rx="6" fill="#f6cd8b"/><text x="7.5" y="19.5" font-family="Liberation Sans" font-size="20" fill="#4a4040" stroke="#4a4040" stroke-width="0.5">g</text></svg>
<div class="t" style="left:129.10px;top:1177.99px;font-size:26px;line-height:36px;letter-spacing:0.931px;color:#000;font-family:'Liberation Sans',sans-serif;">__read_mostly : int</div>
<div class="a" style="left:760px;top:114px;width:2px;height:1091px;background:#c4c4c4;"></div>
<div class="a" style="left:762px;top:114px;width:3036px;height:52px;background:#ececec;"></div>
<div class="a" style="left:762px;top:166px;width:3036px;height:2px;background:#c9c9c9;"></div>
<div class="a" style="left:762px;top:114px;width:170px;height:48px;background:#f7f7f7;"></div>
<div class="a" style="left:762px;top:162px;width:170px;height:5px;background:#9ba7b9;"></div>
<svg style="left:780px;top:126px" width="30" height="30" viewBox="0 0 30 30"><path d="M4 8 L11.8 0 V8 Z" fill="#a9b5bd"/><path d="M14 0 H24 V14 H4 V10 H14 Z" fill="#a9b5bd"/><rect x="0" y="16" width="30" height="14" fill="#c8b4f4"/><text x="3.5" y="27.8" font-family="Liberation Sans" font-weight="bold" font-size="14" fill="#4a3c50">C</text></svg>
<div class="t" style="left:818.70px;top:121.83px;font-size:25px;line-height:35px;letter-spacing:-0.500px;color:#1e1e1e;font-family:'Liberation Sans',sans-serif;transform:scaleX(0.9123);transform-origin:0.00px 0;">main.c</div>
<svg style="left:900px;top:133px;" width="16" height="16" viewBox="0 0 16 16"><path d="M1 1L15 15M15 1L1 15" stroke="#ababab" stroke-width="2"/></svg>
<svg style="left:948px;top:126px" width="30" height="30" viewBox="0 0 30 30"><path d="M4 8 L11.8 0 V8 Z" fill="#a9b5bd"/><path d="M14 0 H24 V14 H4 V10 H14 Z" fill="#a9b5bd"/><rect x="0" y="16" width="30" height="14" fill="#f1bb6b"/><text x="3" y="27.8" font-family="Liberation Sans" font-weight="bold" font-size="14" fill="#4a3c30">H</text></svg>
<div class="t" style="left:987.00px;top:121.83px;font-size:25px;line-height:35px;letter-spacing:-0.500px;color:#1e1e1e;font-family:'Liberation Sans',sans-serif;transform:scaleX(0.9497);transform-origin:0.00px 0;">socket.h</div>
<svg style="left:1088px;top:133px;" width="16" height="16" viewBox="0 0 16 16"><path d="M1 1L15 15M15 1L1 15" stroke="#ababab" stroke-width="2"/></svg>
<svg style="left:1136px;top:126px" width="30" height="30" viewBox="0 0 30 30"><path d="M4 8 L11.8 0 V8 Z" fill="#a9b5bd"/><path d="M14 0 H24 V14 H4 V10 H14 Z" fill="#a9b5bd"/><rect x="0" y="16" width="30" height="14" fill="#c8b4f4"/><text x="3.5" y="27.8" font-family="Liberation Sans" font-weight="bold" font-size="14" fill="#4a3c50">C</text></svg>
<div class="t" style="left:1174.50px;top:121.83px;font-size:25px;line-height:35px;letter-spacing:-0.500px;color:#1e1e1e;font-family:'Liberation Sans',sans-serif;transform:scaleX(0.9518);transform-origin:0.00px 0;">socket.c</div>
<svg style="left:1275px;top:133px;" width="16" height="16" viewBox="0 0 16 16"><path d="M1 1L15 15M15 1L1 15" stroke="#ababab" stroke-width="2"/></svg>
<svg style="left:1322px;top:126px" width="30" height="30" viewBox="0 0 30 30"><path d="M4 8 L11.8 0 V8 Z" fill="#a9b5bd"/><path d="M14 0 H24 V14 H4 V10 H14 Z" fill="#a9b5bd"/><rect x="0" y="16" width="30" height="14" fill="#c8b4f4"/><text x="3.5" y="27.8" font-family="Liberation Sans" font-weight="bold" font-size="14" fill="#4a3c50">C</text></svg>
<div class="t" style="left:1360.80px;top:121.83px;font-size:25px;line-height:35px;letter-spacing:-0.470px;color:#1e1e1e;font-family:'Liberation Sans',sans-serif;">epoll-ctl.c</div>
<svg style="left:1477px;top:133px;" width="16" height="16" viewBox="0 0 16 16"><path d="M1 1L15 15M15 1L1 15" stroke="#ababab" stroke-width="2"/></svg>
<div class="a" style="left:762px;top:168px;width:3036px;height:52px;background:#fefbc9;"></div>
<div class="a" style="left:762px;top:220px;width:3036px;height:2px;background:#c9c9c9;"></div>
<div class="t" style="left:783.50px;top:175.47px;font-size:27.5px;line-height:38px;letter-spacing:0.391px;color:#000;font-family:'Liberation Sans',sans-serif;">This file does not belong to any project target; code insight features might not work properly.</div>
<div class="a" style="left:762px;top:222px;width:3036px;height:936px;background:#fff;"></div>
<div class="a" style="left:762px;top:222px;width:171px;height:936px;background:#f0f0f0;"></div>
<div class="a" style="left:933px;top:222px;width:2px;height:936px;background:#d5d5d5;"></div>
<div class="a" style="left:935px;top:846px;width:2863px;height:44px;background:#2154a6;"></div>
<div class="a" style="left:762px;top:846px;width:171px;height:44px;background:#fdf9e6;"></div>
<div class="a" style="left:935px;top:890px;width:2863px;height:88px;background:#f9e9e6;"></div>
<div class="a" style="left:946px;top:274px;width:48px;height:44px;background:#edf8ee;"></div>
<div class="a" style="left:2226px;top:222px;width:2px;height:936px;background:#d8d8d8;"></div>
<div class="t" style="left:706px;width:121px;text-align:right;top:233px;font-family:'Liberation Mono',monospace;font-size:26.67px;line-height:44px;color:#999;transform:scaleX(0.9);transform-origin:121px 0">847</div>
<div class="t" style="left:946px;top:233px;font-family:'Liberation Mono',monospace;font-size:26.67px;line-height:44px;color:#000"><span style="color:#808000">#ifdef</span><span style=""> CONFIG_HAVE_ARCH_RANDOMIZE_KSTACK_OFFSET</span></div>
<div class="t" style="left:706px;width:121px;text-align:right;top:277px;font-family:'Liberation Mono',monospace;font-size:26.67px;line-height:44px;color:#999;transform:scaleX(0.9);transform-origin:121px 0">848</div>
<div class="t" style="left:946px;top:277px;font-family:'Liberation Mono',monospace;font-size:26.67px;line-height:44px;color:#000"><span style="color:#555">...</span></div>
<div class="t" style="left:706px;width:121px;text-align:right;top:321px;font-family:'Liberation Mono',monospace;font-size:26.67px;line-height:44px;color:#999;transform:scaleX(0.9);transform-origin:121px 0">868</div>
<div class="t" style="left:946px;top:321px;font-family:'Liberation Mono',monospace;font-size:26.67px;line-height:44px;color:#000"><span style="color:#808000">#endif</span></div>
<div class="t" style="left:706px;width:121px;text-align:right;top:365px;font-family:'Liberation Mono',monospace;font-size:26.67px;line-height:44px;color:#999;transform:scaleX(0.9);transform-origin:121px 0">869</div>
<div class="t" style="left:706px;width:121px;text-align:right;top:409px;font-family:'Liberation Mono',monospace;font-size:26.67px;line-height:44px;color:#999;transform:scaleX(0.9);transform-origin:121px 0">870</div>
<div class="t" style="left:946px;top:409px;font-family:'Liberation Mono',monospace;font-size:26.67px;line-height:44px;color:#000"><span style="color:#000080;font-weight:bold">void</span><span style=""> __init __weak arch_call_rest_init(</span><span style="color:#000080;font-weight:bold">void</span><span style="">)</span></div>
<div class="t" style="left:706px;width:121px;text-align:right;top:453px;font-family:'Liberation Mono',monospace;font-size:26.67px;line-height:44px;color:#999;transform:scaleX(0.9);transform-origin:121px 0">871</div>
<div class="t" style="left:946px;top:453px;font-family:'Liberation Mono',monospace;font-size:26.67px;line-height:44px;color:#000"><span style="">{</span></div>
<div class="t" style="left:706px;width:121px;text-align:right;top:497px;font-family:'Liberation Mono',monospace;font-size:26.67px;line-height:44px;color:#999;transform:scaleX(0.9);transform-origin:121px 0">872</div>
<div class="t" style="left:946px;top:497px;font-family:'Liberation Mono',monospace;font-size:26.67px;line-height:44px;color:#000"><span style="">        rest_init();</span></div>
<div class="t" style="left:706px;width:121px;text-align:right;top:541px;font-family:'Liberation Mono',monospace;font-size:26.67px;line-height:44px;color:#999;transform:scaleX(0.9);transform-origin:121px 0">873</div>
<div class="t" style="left:946px;top:541px;font-family:'Liberation Mono',monospace;font-size:26.67px;line-height:44px;color:#000"><span style="">}</span></div>
<div class="t" style="left:706px;width:121px;text-align:right;top:585px;font-family:'Liberation Mono',monospace;font-size:26.67px;line-height:44px;color:#999;transform:scaleX(0.9);transform-origin:121px 0">874</div>
<div class="t" style="left:706px;width:121px;text-align:right;top:629px;font-family:'Liberation Mono',monospace;font-size:26.67px;line-height:44px;color:#999;transform:scaleX(0.9);transform-origin:121px 0">875</div>
<div class="t" style="left:946px;top:629px;font-family:'Liberation Mono',monospace;font-size:26.67px;line-height:44px;color:#000"><span style="">asmlinkage __visible </span><span style="color:#000080;font-weight:bold">void</span><span style=""> __init __no_sanitize_address start_kernel(</span><span style="color:#000080;font-weight:bold">void</span><span style="">)</span></div>
<div class="t" style="left:706px;width:121px;text-align:right;top:673px;font-family:'Liberation Mono',monospace;font-size:26.67px;line-height:44px;color:#999;transform:scaleX(0.9);transform-origin:121px 0">876</div>
<div class="t" style="left:946px;top:673px;font-family:'Liberation Mono',monospace;font-size:26.67px;line-height:44px;color:#000"><span style="">{</span></div>
<div class="t" style="left:706px;width:121px;text-align:right;top:717px;font-family:'Liberation Mono',monospace;font-size:26.67px;line-height:44px;color:#999;transform:scaleX(0.9);transform-origin:121px 0">877</div>
<div class="t" style="left:946px;top:717px;font-family:'Liberation Mono',monospace;font-size:26.67px;line-height:44px;color:#000"><span style="">        </span><span style="color:#000080;font-weight:bold">char</span><span style=""> *command_line;</span><span style="">  </span><span style="color:#8c8c8c;font-style:italic;margin-left:8px">command_line: NULL</span></div>
<div class="t" style="left:706px;width:121px;text-align:right;top:761px;font-family:'Liberation Mono',monospace;font-size:26.67px;line-height:44px;color:#999;transform:scaleX(0.9);transform-origin:121px 0">878</div>
<div class="t" style="left:946px;top:761px;font-family:'Liberation Mono',monospace;font-size:26.67px;line-height:44px;color:#000"><span style="">        </span><span style="color:#000080;font-weight:bold">char</span><span style=""> *after_dashes;</span><span style="">  </span><span style="color:#8c8c8c;font-style:italic;margin-left:8px">after_dashes: &quot;\b&quot;</span></div>
<div class="t" style="left:706px;width:121px;text-align:right;top:805px;font-family:'Liberation Mono',monospace;font-size:26.67px;line-height:44px;color:#999;transform:scaleX(0.9);transform-origin:121px 0">879</div>
<div class="t" style="left:706px;width:121px;text-align:right;top:849px;font-family:'Liberation Mono',monospace;font-size:26.67px;line-height:44px;color:#999;transform:scaleX(0.9);transform-origin:121px 0">880</div>
<div class="t" style="left:946px;top:849px;font-family:'Liberation Mono',monospace;font-size:26.67px;line-height:44px;color:#000"><span style="color:#fff">        set_task_stack_end_magic(&amp;init_task);</span></div>
<div class="t" style="left:706px;width:121px;text-align:right;top:893px;font-family:'Liberation Mono',monospace;font-size:26.67px;line-height:44px;color:#999;transform:scaleX(0.9);transform-origin:121px 0">881</div>
<div class="t" style="left:946px;top:893px;font-family:'Liberation Mono',monospace;font-size:26.67px;line-height:44px;color:#000"><span style="">        smp_setup_processor_id();</span></div>
<div class="t" style="left:706px;width:121px;text-align:right;top:937px;font-family:'Liberation Mono',monospace;font-size:26.67px;line-height:44px;color:#999;transform:scaleX(0.9);transform-origin:121px 0">882</div>
<div class="t" style="left:946px;top:937px;font-family:'Liberation Mono',monospace;font-size:26.67px;line-height:44px;color:#000"><span style="">        debug_objects_early_init();</span></div>
<div class="t" style="left:706px;width:121px;text-align:right;top:981px;font-family:'Liberation Mono',monospace;font-size:26.67px;line-height:44px;color:#999;transform:scaleX(0.9);transform-origin:121px 0">883</div>
<div class="t" style="left:706px;width:121px;text-align:right;top:1025px;font-family:'Liberation Mono',monospace;font-size:26.67px;line-height:44px;color:#999;transform:scaleX(0.9);transform-origin:121px 0">884</div>
<div class="t" style="left:946px;top:1025px;font-family:'Liberation Mono',monospace;font-size:26.67px;line-height:44px;color:#000"><span style="">        cgroup_init_early();</span></div>
<div class="t" style="left:706px;width:121px;text-align:right;top:1069px;font-family:'Liberation Mono',monospace;font-size:26.67px;line-height:44px;color:#999;transform:scaleX(0.9);transform-origin:121px 0">885</div>
<div class="t" style="left:706px;width:121px;text-align:right;top:1113px;font-family:'Liberation Mono',monospace;font-size:26.67px;line-height:44px;color:#999;transform:scaleX(0.9);transform-origin:121px 0">886</div>
<div class="t" style="left:946px;top:1113px;font-family:'Liberation Mono',monospace;font-size:26.67px;line-height:44px;color:#000"><span style="">        local_irq_disable();</span></div>
<svg style="left:925px;top:289px;" width="18" height="18" viewBox="0 0 18 18"><rect x="1" y="1" width="16" height="16" fill="#fff" stroke="#c8c8c8" stroke-width="2"/><path d="M4.5 9h9M9 4.5v9" stroke="#c8c8c8" stroke-width="1.6"/></svg>
<svg style="left:878px;top:416px;" width="25" height="24" viewBox="0 0 25 24"><path d="M7 6h13" stroke="#59a869" stroke-width="2.2"/><path d="M0 6L7 0.5V11.5z" fill="#59a869"/><path d="M5 17.5h13" stroke="#db5860" stroke-width="2.2"/><path d="M24 17.5L17 12V23z" fill="#db5860"/></svg>
<svg style="left:925px;top:421px;" width="18" height="23" viewBox="0 0 18 23"><path d="M1 1H17V14L9 22L1 14Z" fill="#fff" stroke="#c8c8c8" stroke-width="2"/><path d="M4.5 9h9" stroke="#c8c8c8" stroke-width="1.6"/></svg>
<svg style="left:925px;top:547px;" width="18" height="23" viewBox="0 0 18 23"><path d="M1 22H17V9L9 1L1 9Z" fill="#fff" stroke="#c8c8c8" stroke-width="2"/><path d="M4.5 14h9" stroke="#c8c8c8" stroke-width="1.6"/></svg>
<svg style="left:878px;top:636px;" width="25" height="24" viewBox="0 0 25 24"><path d="M7 6h13" stroke="#59a869" stroke-width="2.2"/><path d="M0 6L7 0.5V11.5z" fill="#59a869"/><path d="M5 17.5h13" stroke="#db5860" stroke-width="2.2"/><path d="M24 17.5L17 12V23z" fill="#db5860"/></svg>
<svg style="left:925px;top:641px;" width="18" height="23" viewBox="0 0 18 23"><path d="M1 1H17V14L9 22L1 14Z" fill="#fff" stroke="#c8c8c8" stroke-width="2"/><path d="M4.5 9h9" stroke="#c8c8c8" stroke-width="1.6"/></svg>
<svg style="left:877px;top:854px;" width="28" height="28" viewBox="0 0 28 28"><circle cx="13" cy="14" r="13" fill="#db5860"/><path d="M11.1 4.9L17 9.8L26.4 0.8" fill="none" stroke="#fdf9e6" stroke-width="8" stroke-linejoin="miter"/><path d="M11.1 4.9L17 9.8L26.4 0.8" fill="none" stroke="#666" stroke-width="3.6"/></svg>
<svg style="left:877px;top:898px;" width="28" height="28" viewBox="0 0 28 28"><circle cx="13" cy="14" r="13" fill="#db5860"/><path d="M11.1 4.9L17 9.8L26.4 0.8" fill="none" stroke="#f0f0f0" stroke-width="8" stroke-linejoin="miter"/><path d="M11.1 4.9L17 9.8L26.4 0.8" fill="none" stroke="#666" stroke-width="3.6"/></svg>
<svg style="left:877px;top:942px;" width="28" height="28" viewBox="0 0 28 28"><circle cx="13" cy="14" r="13" fill="#db5860"/><path d="M11.1 4.9L17 9.8L26.4 0.8" fill="none" stroke="#f0f0f0" stroke-width="8" stroke-linejoin="miter"/><path d="M11.1 4.9L17 9.8L26.4 0.8" fill="none" stroke="#666" stroke-width="3.6"/></svg>
<svg style="left:842px;top:856px;" width="29" height="23" viewBox="0 0 29 23"><path d="M0 11.5h24" stroke="#f0a30a" stroke-width="5"/><path d="M15.5 2.5L25 11.5L15.5 20.5" fill="none" stroke="#f0a30a" stroke-width="4.5"/></svg>
<svg style="left:3574px;top:236px;" width="24" height="22" viewBox="0 0 24 22"><path d="M12 0L24 22H0Z" fill="#edc600"/><rect x="10.5" y="7" width="3.2" height="7" fill="#fff"/><rect x="10.5" y="16" width="3.2" height="3.2" fill="#fff"/></svg>
<div class="t" style="left:3605.00px;top:230.68px;font-size:24px;line-height:34px;letter-spacing:0.000px;color:#6e6e6e;font-family:'Liberation Sans',sans-serif;">9</div>
<svg style="left:3634px;top:238px;" width="24" height="24" viewBox="0 0 24 24"><path d="M1.5 9L9 16L22.5 2.5" fill="none" stroke="#59a869" stroke-width="4.5"/><path d="M0 23L3.5 19.5L7 23L10.5 19.5L14 23L17.5 19.5L22 16" fill="none" stroke="#59a869" stroke-width="1.8"/></svg>
<div class="t" style="left:3665.00px;top:230.68px;font-size:24px;line-height:34px;letter-spacing:-0.500px;color:#6e6e6e;font-family:'Liberation Sans',sans-serif;transform:scaleX(0.9154);transform-origin:0.00px 0;">109</div>
<svg style="left:3724px;top:242px;" width="16" height="11" viewBox="0 0 16 11"><path d="M1.5 9.5L8 2.5L14.5 9.5" fill="none" stroke="#6e6e6e" stroke-width="2.6"/></svg>
<svg style="left:3766px;top:243px;" width="16" height="11" viewBox="0 0 16 11"><path d="M1.5 1.5L8 8.5L14.5 1.5" fill="none" stroke="#6e6e6e" stroke-width="2.6"/></svg>
<div class="a" style="left:3770px;top:363px;width:28px;height:3px;background:#edc600;"></div>
<div class="a" style="left:3770px;top:389px;width:28px;height:3px;background:#edc600;"></div>
<div class="a" style="left:3770px;top:398px;width:28px;height:3px;background:#edc600;"></div>
<div class="a" style="left:3770px;top:432px;width:28px;height:3px;background:#edc600;"></div>
<div class="a" style="left:3770px;top:443px;width:28px;height:3px;background:#edc600;"></div>
<div class="a" style="left:3770px;top:559px;width:28px;height:3px;background:#edc600;"></div>
<div class="a" style="left:3770px;top:683px;width:28px;height:3px;background:#edc600;"></div>
<div class="a" style="left:3770px;top:965px;width:28px;height:3px;background:#edc600;"></div>
<div class="a" style="left:3770px;top:1051px;width:28px;height:3px;background:#edc600;"></div>
<div class="a" style="left:3778px;top:700px;width:14px;height:64px;background:#c8c8c8;border-radius:7px"></div>
<div class="a" style="left:3770px;top:737px;width:28px;height:3px;background:#2154a6;"></div>
<div class="a" style="left:762px;top:1158px;width:3036px;height:2px;background:#dcdcdc;"></div>
<div class="a" style="left:762px;top:1160px;width:3036px;height:45px;background:#f0f0f0;"></div>
<div class="a" style="left:956px;top:1168px;width:27px;height:27px;background:#f5bac8;border-radius:5px;color:#5a3c44;font-size:17px;line-height:27px;text-align:center">f</div>
<div class="t" style="left:994.00px;top:1166.18px;font-size:24px;line-height:34px;letter-spacing:0.773px;color:#555;font-family:'Liberation Sans',sans-serif;">start_kernel</div>
<div class="a" style="left:42px;top:1204px;width:3756px;height:2px;background:#c4c4c4;"></div>
<div class="a" style="left:42px;top:1206px;width:3756px;height:52px;background:#e1e4ec;"></div>
<div class="a" style="left:42px;top:1258px;width:3756px;height:2px;background:#c4c4c4;"></div>
<div class="t" style="left:55.00px;top:1216.38px;font-size:24px;line-height:34px;letter-spacing:0.500px;color:#000;font-family:'Liberation Sans',sans-serif;">Debug:</div>
<svg style="left:176px;top:1218px" width="32" height="32" viewBox="0 0 32 32"><g fill="#a9b5bd"><rect x="9.1" y="0.1" width="19.7" height="3.7"/><rect x="9.1" y="3.8" width="1.6" height="4.1"/><rect x="27.1" y="3.8" width="1.7" height="13.8"/><rect x="25.1" y="16.2" width="3.7" height="1.4"/><rect x="1.1" y="4" width="5.6" height="3.9"/><rect x="1.1" y="4" width="1.8" height="21.8"/><rect x="1.1" y="24" width="22" height="1.8"/><rect x="23.1" y="20" width="1.6" height="4"/></g><g fill="#606060"><rect x="5" y="10.1" width="12.6" height="1.9"/><rect x="5" y="10.1" width="1.7" height="3.7"/><path d="M17 5.9L22.6 10.9L17 15.8Z"/></g><rect x="5" y="16" width="15.9" height="5.9" fill="#8ed3ec"/><circle cx="27.1" cy="26.1" r="4.2" fill="#00e000" stroke="#2a8a2a" stroke-width="1"/></svg>
<div class="t" style="left:215.00px;top:1216.38px;font-size:24px;line-height:34px;letter-spacing:0.438px;color:#000;font-family:'Liberation Sans',sans-serif;">linux</div>
<svg style="left:280px;top:1227px;" width="16" height="15" viewBox="0 0 16 15"><path d="M1 1L15 14M15 1L1 14" stroke="#b8bcc4" stroke-width="2"/></svg>
<div class="a" style="left:150px;top:1254px;width:168px;height:5px;background:#3f7fc9;"></div>
<svg style="left:3706px;top:1219px" width="27" height="27" viewBox="0 0 26 26"><path fill="#6e6e6e" fill-rule="evenodd" d="M9.09 4.23 L9.79 0.92 L16.21 0.92 L16.91 4.23 L18.63 5.23 L21.85 4.18 L25.07 9.74 L22.55 12.01 L22.55 13.99 L25.07 16.26 L21.85 21.82 L18.63 20.77 L16.91 21.77 L16.21 25.08 L9.79 25.08 L9.09 21.77 L7.37 20.77 L4.15 21.82 L0.93 16.26 L3.45 13.99 L3.45 12.01 L0.93 9.74 L4.15 4.18 L7.37 5.23Z M13 8.2a4.8 4.8 0 1 0 0.01 0Z"/></svg>
<div class="a" style="left:3760px;top:1229px;width:25px;height:5px;background:#6e6e6e;"></div>
<div class="a" style="left:42px;top:1260px;width:3756px;height:54px;background:#ececec;"></div>
<div class="a" style="left:98px;top:1314px;width:3700px;height:2px;background:#c9c9c9;"></div>
<div class="a" style="left:42px;top:1260px;width:56px;height:766px;background:#ececec;"></div>
<div class="a" style="left:98px;top:1260px;width:2px;height:766px;background:#c8c8c8;"></div>
<div class="a" style="left:100px;top:1311px;width:154px;height:5px;background:#3f7fc9;"></div>
<div class="t" style="left:127.30px;top:1271.83px;font-size:23px;line-height:32px;letter-spacing:-0.329px;color:#000;font-family:'Liberation Sans',sans-serif;">Debugger</div>
<svg style="left:280px;top:1278px;" width="24" height="20" viewBox="0 0 24 20"><rect width="24" height="20" fill="#6e6e6e"/><path d="M9 5l5 5-5 5" fill="none" stroke="#fff" stroke-width="2.5"/></svg>
<div class="t" style="left:316.50px;top:1271.83px;font-size:23px;line-height:32px;letter-spacing:-0.500px;color:#000;font-family:'Liberation Sans',sans-serif;">Console</div>
<svg style="left:430px;top:1276px;" width="24" height="22" viewBox="0 0 24 22"><rect y="0" width="24" height="4" fill="#6e6e6e"/><rect y="8" width="24" height="6" fill="#389fd6"/><rect y="18" width="24" height="4" fill="#6e6e6e"/></svg>
<div class="a" style="left:474px;top:1266px;width:2px;height:40px;background:#c8c8c8;"></div>
<svg style="left:495px;top:1273px;" width="26" height="25" viewBox="0 0 26 25"><path d="M1.5 13L10.5 4L17 10.5" fill="none" stroke="#389fd6" stroke-width="3.5"/><path d="M25 8V20H13z" fill="#389fd6"/><rect x="1" y="21" width="24" height="4" fill="#6e6e6e"/></svg>
<svg style="left:548px;top:1272px;" width="24" height="26" viewBox="0 0 24 26"><path d="M12 0V12" stroke="#389fd6" stroke-width="4"/><path d="M3 10H21L12 19z" fill="#389fd6"/><rect x="0" y="22" width="24" height="4" fill="#6e6e6e"/></svg>
<svg style="left:600px;top:1272px;" width="24" height="26" viewBox="0 0 24 26"><path d="M12 0V12" stroke="#db5860" stroke-width="4"/><path d="M3 10H21L12 19z" fill="#db5860"/><rect x="0" y="22" width="24" height="4" fill="#6e6e6e"/></svg>
<svg style="left:652px;top:1273px;" width="24" height="25" viewBox="0 0 24 25"><path d="M12 8V19" stroke="#389fd6" stroke-width="4"/><path d="M3 10H21L12 0z" fill="#389fd6"/><rect x="0" y="21" width="24" height="4" fill="#6e6e6e"/></svg>
<svg style="left:703px;top:1273px;" width="28" height="27" viewBox="0 0 28 27"><path d="M1.5 1.5L11 11" stroke="#389fd6" stroke-width="4"/><path d="M15 3V15H3z" fill="#389fd6"/><path d="M17 11.5h10M17 26h10M22 11.5V26" stroke="#6e6e6e" stroke-width="2"/></svg>
<div class="a" style="left:748px;top:1266px;width:2px;height:40px;background:#c8c8c8;"></div>
<svg style="left:770px;top:1274px;" width="24" height="24" viewBox="0 0 24 24"><rect width="24" height="24" fill="#6e6e6e"/><rect x="4" y="4" width="16" height="4" fill="#ececec"/><path d="M4 11h4v3H4zM10 11h4v3h-4zM16 11h4v3h-4zM4 17h4v3H4zM10 17h4v3h-4zM16 17h4v3h-4z" fill="#ececec"/></svg>
<svg style="left:822px;top:1276px;" width="24" height="21" viewBox="0 0 24 21"><path d="M0 1h9M0 7.5h9M0 13.5h9M0 20h9" stroke="#6e6e6e" stroke-width="3"/><rect x="12" y="0" width="12" height="21" fill="#6e6e6e"/></svg>
<svg style="left:3762px;top:1275px;" width="35" height="30" viewBox="0 0 35 30"><rect x="0" y="0" width="15" height="9" fill="#6e6e6e"/><rect x="17" y="0" width="8" height="9" fill="#6e6e6e"/><rect x="0" y="11" width="25" height="10" fill="#6e6e6e"/><path d="M23 24h11l-5.5 6z" fill="#333"/></svg>
<svg style="left:57px;top:1275px;" width="28" height="28" viewBox="0 0 28 28"><path d="M5 21A10 10 0 1 1 20 5" fill="none" stroke="#59a869" stroke-width="4"/><path d="M17 0L28 6L18 13z" fill="#59a869"/><rect x="14.5" y="17" width="10.5" height="10.5" fill="#6e6e6e"/></svg>
<div class="a" style="left:50px;top:1320px;width:40px;height:2px;background:#d0d0d0;"></div>
<svg style="left:60px;top:1342px;" width="24" height="22" viewBox="0 0 24 22"><rect x="0" y="0" width="6" height="22" fill="#59a869"/><path d="M10 0L24 11L10 22z" fill="#59a869"/></svg>
<svg style="left:62px;top:1394px;" width="16" height="22" viewBox="0 0 16 22"><rect x="0" y="0" width="5.5" height="22" fill="#bdbdbd"/><rect x="10.5" y="0" width="5.5" height="22" fill="#bdbdbd"/></svg>
<div class="a" style="left:60px;top:1448px;width:20px;height:20px;background:#db5860;"></div>
<div class="a" style="left:50px;top:1490px;width:40px;height:2px;background:#d0d0d0;"></div>
<svg style="left:57px;top:1509px;" width="28" height="28" viewBox="0 0 28 28"><circle cx="18.6" cy="9" r="8.5" fill="#db5860"/><circle cx="10" cy="18" r="9" fill="#db5860" stroke="#ececec" stroke-width="2.5"/></svg>
<svg style="left:57px;top:1563px;" width="28" height="26" viewBox="0 0 28 26"><circle cx="13" cy="12.7" r="10" fill="#db5860"/><path d="M2 24L24.7 2" stroke="#ececec" stroke-width="6"/><path d="M2 24L24.7 2" stroke="#6e6e6e" stroke-width="2.6"/></svg>
<div class="a" style="left:50px;top:1608px;width:40px;height:2px;background:#d0d0d0;"></div>
<svg style="left:57px;top:1629px" width="27" height="27" viewBox="0 0 26 26"><path fill="#6e6e6e" fill-rule="evenodd" d="M9.09 4.23 L9.79 0.92 L16.21 0.92 L16.91 4.23 L18.63 5.23 L21.85 4.18 L25.07 9.74 L22.55 12.01 L22.55 13.99 L25.07 16.26 L21.85 21.82 L18.63 20.77 L16.91 21.77 L16.21 25.08 L9.79 25.08 L9.09 21.77 L7.37 20.77 L4.15 21.82 L0.93 16.26 L3.45 13.99 L3.45 12.01 L0.93 9.74 L4.15 4.18 L7.37 5.23Z M13 8.2a4.8 4.8 0 1 0 0.01 0Z"/></svg>
<svg style="left:79px;top:1652px;" width="9" height="6" viewBox="0 0 9 6"><path d="M0 0h9l-4.5 6z" fill="#333"/></svg>
<div class="a" style="left:50px;top:1674px;width:40px;height:2px;background:#d0d0d0;"></div>
<svg style="left:55px;top:1694px;" width="30" height="30" viewBox="0 0 30 30"><path d="M16 1L29 14L24 14L18 20L18 25L13 20L2 29L11 17L6 12L11 12L16 6z" fill="#6e6e6e"/></svg>
<div class="a" style="left:100px;top:1316px;width:736px;height:52px;background:#ececec;"></div>
<div class="t" style="left:127.30px;top:1326.03px;font-size:23px;line-height:32px;letter-spacing:-0.500px;color:#000;font-family:'Liberation Sans',sans-serif;transform:scaleX(0.9563);transform-origin:0.00px 0;">Frames</div>
<div class="a" style="left:100px;top:1368px;width:736px;height:2px;background:#c9c9c9;"></div>
<div class="a" style="left:836px;top:1260px;width:2px;height:766px;background:#c8c8c8;"></div>
<div class="a" style="left:100px;top:1370px;width:736px;height:656px;background:#fff;"></div>
<div class="a" style="left:100px;top:1370px;width:736px;height:56px;background:#ececec;"></div>
<div class="a" style="left:106px;top:1376px;width:612px;height:44px;background:#fff;border:1.5px solid #c4c4c4;border-radius:7px"></div>
<div class="a" style="left:684px;top:1376px;width:34px;height:44px;background:linear-gradient(#4c9bf7,#1f6ef0);border-radius:0 7px 7px 0"></div>
<svg style="left:691px;top:1382px;" width="20" height="32" viewBox="0 0 20 32"><path d="M3 11L10 4L17 11M3 21L10 28L17 21" fill="none" stroke="#fff" stroke-width="2.5"/></svg>
<svg style="left:122px;top:1386px;" width="28" height="22" viewBox="0 0 28 22"><path d="M2 11L10 19L26 2" fill="none" stroke="#f0905a" stroke-width="5"/></svg>
<div class="t" style="left:159.00px;top:1379.64px;font-size:27px;line-height:38px;letter-spacing:-0.071px;color:#000;font-family:'Liberation Sans',sans-serif;">Thread-1</div>
<svg style="left:744px;top:1387px;" width="19" height="23" viewBox="0 0 19 23"><path d="M9.5 3V23" stroke="#bdbdbd" stroke-width="2.5"/><path d="M1.5 10L9.5 2L17.5 10" fill="none" stroke="#bdbdbd" stroke-width="2.5"/></svg>
<svg style="left:796px;top:1387px;" width="21" height="23" viewBox="0 0 21 23"><path d="M10.5 0V20" stroke="#333" stroke-width="2.5"/><path d="M2.5 13L10.5 21L18.5 13" fill="none" stroke="#333" stroke-width="2.5"/></svg>
<div class="a" style="left:100px;top:1426px;width:736px;height:2px;background:#d5d5d5;"></div>
<div class="a" style="left:100px;top:1430px;width:736px;height:40px;background:#4074dc;"></div>
<svg style="left:120px;top:1436px" width="26" height="26" viewBox="0 0 26 26"><path d="M2 2h16v4M2 2v16h4" fill="none" stroke="#6e6e6e" stroke-width="3"/><rect x="8.5" y="8.5" width="15" height="15" fill="none" stroke="#6e6e6e" stroke-width="3"/></svg>
<div class="t" style="left:154.80px;top:1432.39px;font-size:26px;line-height:36px;letter-spacing:1.077px;color:#fff;font-family:'Liberation Sans',sans-serif;">start_kernel</div>
<div class="t" style="left:313.00px;top:1432.39px;font-size:26px;line-height:36px;letter-spacing:1.461px;color:#fff;font-family:'Liberation Sans',sans-serif;font-style:italic;">main.c:880</div>
<svg style="left:120px;top:1476px" width="26" height="26" viewBox="0 0 26 26"><path d="M2 2h16v4M2 2v16h4" fill="none" stroke="#6e6e6e" stroke-width="3"/><rect x="8.5" y="8.5" width="15" height="15" fill="none" stroke="#6e6e6e" stroke-width="3"/></svg>
<div class="t" style="left:156.70px;top:1472.79px;font-size:26px;line-height:36px;letter-spacing:0.975px;color:#8c8c8c;font-family:'Liberation Sans',sans-serif;font-style:italic;">&lt;unknown&gt;</div>
<div class="t" style="left:307.00px;top:1472.79px;font-size:26px;line-height:36px;letter-spacing:-0.500px;color:#8c8c8c;font-family:'Liberation Sans',sans-serif;transform:scaleX(0.9618);transform-origin:0.00px 0;">0x0000000000000000</div>
<div class="a" style="left:838px;top:1316px;width:2960px;height:52px;background:#ececec;"></div>
<div class="a" style="left:838px;top:1368px;width:2960px;height:2px;background:#c9c9c9;"></div>
<div class="a" style="left:838px;top:1366px;width:146px;height:4px;background:#3f7fc9;"></div>
<div class="t" style="left:864.50px;top:1325.03px;font-size:23px;line-height:32px;letter-spacing:-0.406px;color:#000;font-family:'Liberation Sans',sans-serif;">Variables</div>
<svg style="left:1010px;top:1332px;" width="24" height="20" viewBox="0 0 24 20"><rect width="24" height="20" fill="#6e6e6e"/><path d="M9 5l5 5-5 5" fill="none" stroke="#fff" stroke-width="2.5"/></svg>
<div class="t" style="left:1046.60px;top:1325.03px;font-size:23px;line-height:32px;letter-spacing:-0.500px;color:#000;font-family:'Liberation Sans',sans-serif;transform:scaleX(0.9251);transform-origin:0.00px 0;">GDB</div>
<div class="t" style="left:1136.70px;top:1325.03px;font-size:23px;line-height:32px;letter-spacing:-0.350px;color:#000;font-family:'Liberation Sans',sans-serif;">Memory View</div>
<div class="a" style="left:838px;top:1370px;width:48px;height:656px;background:#ececec;"></div>
<div class="a" style="left:886px;top:1370px;width:2px;height:656px;background:#c8c8c8;"></div>
<div class="a" style="left:888px;top:1370px;width:2910px;height:656px;background:#fff;"></div>
<svg style="left:852px;top:1386px;" width="20" height="20" viewBox="0 0 20 20"><path d="M10 0V20M0 10H20" stroke="#6e6e6e" stroke-width="4"/></svg>
<div class="a" style="left:852px;top:1446px;width:20px;height:4px;background:#bdbdbd;"></div>
<svg style="left:852px;top:1494px;" width="20" height="12" viewBox="0 0 20 12"><path d="M0 12L10 0L20 12z" fill="#d0d0d0"/></svg>
<svg style="left:852px;top:1546px;" width="20" height="12" viewBox="0 0 20 12"><path d="M0 0L10 12L20 0z" fill="#d0d0d0"/></svg>
<svg style="left:849px;top:1589px;" width="25" height="27" viewBox="0 0 25 27"><path d="M2 18V2H17" fill="none" stroke="#d0d0d0" stroke-width="3"/><rect x="7.5" y="7.5" width="16" height="18" fill="none" stroke="#d0d0d0" stroke-width="3"/><path d="M11 13h9M11 17h9M11 21h9" stroke="#d0d0d0" stroke-width="2"/></svg>
<div class="a" style="left:840px;top:1634px;width:45px;height:44px;background:#cfcfcf;border-radius:6px"></div>
<svg style="left:845px;top:1648px;" width="34" height="17" viewBox="0 0 34 17"><circle cx="8" cy="9" r="6.5" fill="none" stroke="#6e6e6e" stroke-width="3"/><circle cx="26" cy="9" r="6.5" fill="none" stroke="#6e6e6e" stroke-width="3"/><path d="M14 7c2-1.5 4-1.5 6 0M1 6L3 1M33 6L31 1" fill="none" stroke="#6e6e6e" stroke-width="2.5"/></svg>
<div class="a" style="left:940px;top:1378px;width:24px;height:24px;background:#8dd4ec;color:#3d4a55;font-size:15px;line-height:24px;text-align:center;font-weight:bold;letter-spacing:-0.3px">01</div>
<div class="t" style="left:974.50px;top:1373.59px;font-size:26px;line-height:36px;letter-spacing:0.945px;color:#800000;font-family:'Liberation Sans',sans-serif;">command_line</div>
<div class="t" style="left:1163.40px;top:1373.59px;font-size:26px;line-height:36px;letter-spacing:0.000px;color:#000;font-family:'Liberation Sans',sans-serif;">=</div>
<div class="t" style="left:1187.00px;top:1373.59px;font-size:26px;line-height:36px;letter-spacing:1.115px;color:#8c8c8c;font-family:'Liberation Sans',sans-serif;">{char * | 0x0}</div>
<div class="t" style="left:1359.60px;top:1373.59px;font-size:26px;line-height:36px;letter-spacing:0.100px;color:#000;font-family:'Liberation Sans',sans-serif;">NULL</div>
<svg style="left:902px;top:1420px;" width="18" height="15.5" viewBox="0 0 18 15.5"><path d="M0 0H18L9 15.5z" fill="#ababab"/></svg>
<svg style="left:942px;top:1418px;" width="20" height="22" viewBox="0 0 20 22"><rect y="0" width="20" height="6" fill="#f6cd86"/><rect y="8" width="20" height="5.6" fill="#f6cd86"/><rect y="16" width="20" height="6" fill="#f6cd86"/></svg>
<div class="t" style="left:974.50px;top:1413.69px;font-size:26px;line-height:36px;letter-spacing:0.914px;color:#800000;font-family:'Liberation Sans',sans-serif;">after_dashes</div>
<div class="t" style="left:1144.40px;top:1413.69px;font-size:26px;line-height:36px;letter-spacing:0.000px;color:#000;font-family:'Liberation Sans',sans-serif;">=</div>
<div class="t" style="left:1168.00px;top:1413.69px;font-size:26px;line-height:36px;letter-spacing:1.546px;color:#8c8c8c;font-family:'Liberation Sans',sans-serif;">{char * | 0xffff800011c43500}</div>
<div class="t" style="left:1551.60px;top:1413.69px;font-size:26px;line-height:36px;letter-spacing:1.850px;color:#000;font-family:'Liberation Sans',sans-serif;">&quot;\b&quot;</div>
<div class="a" style="left:976px;top:1458px;width:24px;height:24px;background:#8dd4ec;color:#3d4a55;font-size:15px;line-height:24px;text-align:center;font-weight:bold;letter-spacing:-0.3px">01</div>
<div class="t" style="left:1010.80px;top:1452.99px;font-size:26px;line-height:36px;letter-spacing:1.000px;color:#800000;font-family:'Liberation Sans',sans-serif;">*after_dashes</div>
<div class="t" style="left:1192.80px;top:1452.99px;font-size:26px;line-height:36px;letter-spacing:0.000px;color:#000;font-family:'Liberation Sans',sans-serif;">=</div>
<div class="t" style="left:1216.50px;top:1452.99px;font-size:26px;line-height:36px;letter-spacing:1.100px;color:#8c8c8c;font-family:'Liberation Sans',sans-serif;">{char}</div>
<div class="t" style="left:1299.70px;top:1452.99px;font-size:26px;line-height:36px;letter-spacing:1.950px;color:#000;font-family:'Liberation Sans',sans-serif;">8 &#x27;\b&#x27;</div>
<div class="a" style="left:0px;top:2026px;width:3840px;height:2px;background:#c4c4c4;"></div>
<div class="a" style="left:0px;top:2028px;width:3840px;height:40px;background:#ececec;"></div>
<div class="a" style="left:40px;top:2028px;width:142px;height:40px;background:#bababa;"></div>
<svg style="left:65px;top:2037px;" width="26" height="26" viewBox="0 0 26 26"><path d="M5 1L10 4.5L15 1" fill="none" stroke="#6e6e6e" stroke-width="2.6"/><rect x="3.5" y="4.5" width="13" height="18.5" rx="6.5" fill="#6e6e6e"/><rect x="0" y="7.5" width="20" height="2.6" fill="#6e6e6e"/><rect x="0" y="13" width="20" height="2.6" fill="#6e6e6e"/><rect x="0" y="18.5" width="20" height="2.6" fill="#6e6e6e"/><circle cx="19.5" cy="19.5" r="4" fill="#00e000" stroke="#2a8a2a" stroke-width="1"/></svg>
<div class="t" style="left:97.30px;top:2032.63px;font-size:23px;line-height:32px;letter-spacing:-0.500px;color:#000;font-family:'Liberation Sans',sans-serif;transform:scaleX(0.9992);transform-origin:0.00px 0;">Debug</div>
<svg style="left:206px;top:2040px;" width="21" height="17" viewBox="0 0 21 17"><path d="M0 1.5h4M0 8.5h4M0 15.5h4M7 1.5h14M7 8.5h14M7 15.5h14" stroke="#6e6e6e" stroke-width="3"/></svg>
<div class="t" style="left:236.60px;top:2032.63px;font-size:23px;line-height:32px;letter-spacing:-0.500px;color:#000;font-family:'Liberation Sans',sans-serif;transform:scaleX(0.9364);transform-origin:0.00px 0;">TODO</div>
<svg style="left:341px;top:2038px;" width="21" height="21" viewBox="0 0 21 21"><circle cx="10.5" cy="10.5" r="10.5" fill="#6e6e6e"/><rect x="9" y="4" width="3.2" height="8.5" fill="#ececec"/><rect x="9" y="14.5" width="3.2" height="3.2" fill="#ececec"/></svg>
<div class="t" style="left:373.00px;top:2032.63px;font-size:23px;line-height:32px;letter-spacing:-0.500px;color:#000;font-family:'Liberation Sans',sans-serif;transform:scaleX(0.9963);transform-origin:0.00px 0;">Problems</div>
<svg style="left:512px;top:2038px;" width="23" height="21" viewBox="0 0 23 21"><rect width="23" height="21" fill="#6e6e6e"/><path d="M4 4l5 5-5 5M11 16h8" fill="none" stroke="#ececec" stroke-width="2"/></svg>
<div class="t" style="left:545.00px;top:2032.63px;font-size:23px;line-height:32px;letter-spacing:-0.429px;color:#000;font-family:'Liberation Sans',sans-serif;">Terminal</div>
<svg style="left:677px;top:2036px;" width="25" height="25" viewBox="0 0 25 25"><path d="M12.5 0L25 6.5L12.5 13L0 6.5z" fill="#6e6e6e"/><path d="M0 12L12.5 18.5L25 12M0 18L12.5 24.5L25 18" fill="none" stroke="#6e6e6e" stroke-width="2.5"/></svg>
<div class="t" style="left:710.70px;top:2032.63px;font-size:23px;line-height:32px;letter-spacing:-0.436px;color:#000;font-family:'Liberation Sans',sans-serif;">Python Packages</div>
<svg style="left:3645px;top:2037px;" width="26" height="26" viewBox="0 0 26 26"><path d="M12.5 24H24V12.5A11.5 11.5 0 1 0 12.5 24Z" fill="none" stroke="#6e6e6e" stroke-width="2.6"/></svg>
<div class="t" style="left:3679.00px;top:2032.63px;font-size:23px;line-height:32px;letter-spacing:-0.500px;color:#000;font-family:'Liberation Sans',sans-serif;transform:scaleX(0.9920);transform-origin:0.00px 0;">Event Log</div>
<div class="a" style="left:0px;top:2068px;width:3840px;height:2px;background:#c9c9c9;"></div>
<div class="a" style="left:0px;top:2070px;width:3840px;height:40px;background:#ececec;"></div>
<svg style="left:12px;top:2078px;" width="25" height="25" viewBox="0 0 25 25"><path d="M1.5 6V23.5H19" fill="none" stroke="#6e6e6e" stroke-width="2"/><rect x="6" y="1.5" width="17.5" height="17.5" fill="none" stroke="#6e6e6e" stroke-width="2"/></svg>
<div class="t" style="left:3239.00px;top:2072.43px;font-size:25px;line-height:35px;letter-spacing:-0.500px;color:#000;font-family:'Liberation Sans',sans-serif;transform:scaleX(0.9256);transform-origin:0.00px 0;">880:1</div>
<div class="t" style="left:3321.00px;top:2072.43px;font-size:25px;line-height:35px;letter-spacing:-0.500px;color:#000;font-family:'Liberation Sans',sans-serif;transform:scaleX(0.8000);transform-origin:0.00px 0;">LF</div>
<div class="t" style="left:3369.00px;top:2072.43px;font-size:25px;line-height:35px;letter-spacing:-0.500px;color:#000;font-family:'Liberation Sans',sans-serif;transform:scaleX(0.9367);transform-origin:0.00px 0;">UTF-8</div>
<div class="t" style="left:3459.40px;top:2072.43px;font-size:25px;line-height:35px;letter-spacing:-0.500px;color:#000;font-family:'Liberation Sans',sans-serif;transform:scaleX(0.9161);transform-origin:0.00px 0;">ClangFormat</div>
<div class="t" style="left:3613.00px;top:2072.43px;font-size:25px;line-height:35px;letter-spacing:-0.500px;color:#8c8c8c;font-family:'Liberation Sans',sans-serif;transform:scaleX(0.9381);transform-origin:0.00px 0;">C: fixdep.c</div>
<svg style="left:3743px;top:2080px;" width="22" height="21" viewBox="0 0 22 21"><path d="M2.5 10V5.5a4.5 4.5 0 0 1 9 0" fill="none" stroke="#6e6e6e" stroke-width="2.5"/><rect x="7" y="10" width="15" height="11" fill="#6e6e6e"/></svg>
<svg style="left:3792px;top:2078px;" width="24" height="24" viewBox="0 0 24 24"><circle cx="12" cy="12" r="12" fill="#c8c8c8"/><rect x="10.3" y="4.5" width="3.4" height="9.5" fill="#fff"/><rect x="10.3" y="16" width="3.4" height="3.4" fill="#fff"/></svg>
</div></body></html>
